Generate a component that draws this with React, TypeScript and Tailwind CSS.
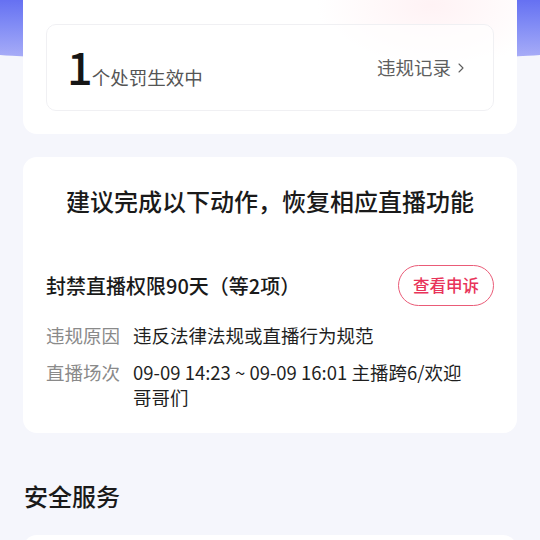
import { ChevronRight } from "lucide-react";

const details = [
  { label: "违规原因", value: "违反法律法规或直播行为规范" },
  { label: "直播场次", value: "09-09 14:23 ~ 09-09 16:01 主播跨6/欢迎哥哥们" },
];

export default function App() {
  return (
    <div className="relative min-h-screen overflow-hidden bg-[#f5f6fc] font-['Noto_Sans_CJK_SC','Noto_Sans',sans-serif] text-[#1f1f1f]">
      <div
        aria-hidden="true"
        className="pointer-events-none absolute -left-[40px] -right-[40px] -top-[20px] h-[82px] rounded-b-[50%_14px] bg-gradient-to-b from-[#5258ef] to-[#aeb1f7]"
      />
      <main className="relative px-[23px]">
        <section className="relative overflow-hidden rounded-b-[14px] bg-white px-[23px] pb-[23px] pt-[24px]">
          <span
            aria-hidden="true"
            className="pointer-events-none absolute -right-[30px] -top-[60px] h-[130px] w-[230px] rounded-full bg-[radial-gradient(closest-side,rgba(255,232,236,0.55),rgba(255,244,244,0))]"
          />
          <div className="relative flex h-[87px] items-center justify-between rounded-[10px] border border-[#f0f0f3] bg-white/60 pl-[20px] pr-[24px]">
            <div className="flex items-baseline">
              <span className="text-[45px] font-medium leading-none text-[#161616]">1</span>
              <span className="ml-[-1px] text-[18.5px] text-[#555]">个处罚生效中</span>
            </div>
            <button className="flex items-center text-[18.5px] text-[#5e5e5e]">
              违规记录
              <ChevronRight className="ml-[2px] h-[16px] w-[16px]" strokeWidth={1.6} />
            </button>
          </div>
        </section>

        <section className="mt-[23px] rounded-[14px] bg-white px-[23px] pb-[23px] pt-[26px]">
          <h2 className="text-center text-[24px] font-medium leading-[36px] text-[#1a1a1a]">
            建议完成以下动作，恢复相应直播功能
          </h2>
          <div className="mt-[46px] flex items-center justify-between">
            <h3 className="text-[20px] font-medium text-[#1a1a1a]">封禁直播权限90天（等2项）</h3>
            <button className="h-[41px] w-[96px] rounded-full border border-[#ea5b77] text-[16.5px] font-medium text-[#e8345a]">
              查看申诉
            </button>
          </div>
          <dl className="mt-[17px] flex flex-col gap-[12px]">
            {details.map((d) => (
              <div key={d.label} className="flex text-[18.5px] leading-[25px]">
                <dt className="w-[87px] shrink-0 text-[#8a8a8a]">{d.label}</dt>
                <dd className="w-[340px] text-[#1f1f1f]">{d.value}</dd>
              </div>
            ))}
          </dl>
        </section>

        <h2 className="mt-[46px] pl-[1px] text-[24px] font-medium leading-[34px] text-[#1a1a1a]">安全服务</h2>
        <section className="mt-[22px] h-[60px] rounded-[14px] bg-white" />
      </main>
    </div>
  );
}
